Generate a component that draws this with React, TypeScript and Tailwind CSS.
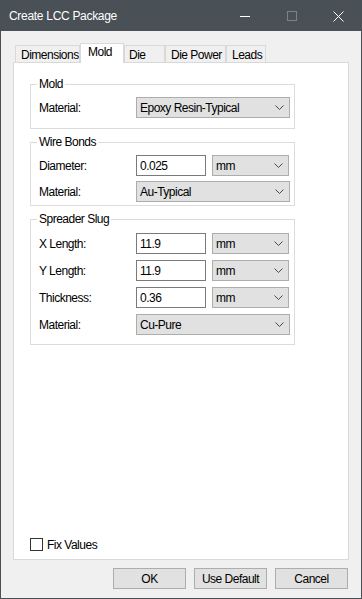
import React from "react";

const Chevron = () => (
  <svg width="9" height="5" viewBox="0 0 9 5" className="shrink-0">
    <path d="M0.5 0.5 L4.5 4.5 L8.5 0.5" fill="none" stroke="#4a4a4a" strokeWidth="1" />
  </svg>
);

function Combo({ value, width }: { value: string; width: string }) {
  return (
    <div className={`flex h-[21px] ${width} items-center justify-between border border-[#adadad] bg-[#e1e1e1] pl-[3px] pr-[5px]`}>
      <span>{value}</span>
      <Chevron />
    </div>
  );
}

function TextBox({ value }: { value: string }) {
  return (
    <div className="flex h-[21px] w-[70px] items-center border border-[#7a7a7a] bg-white pl-[3px]">
      {value}
    </div>
  );
}

function Row({ label, children }: { label: string; children: React.ReactNode }) {
  return (
    <div className="flex h-[21px] items-center">
      <span className="w-[97px] shrink-0">{label}</span>
      {children}
    </div>
  );
}

function UnitRow({ label, value }: { label: string; value: string }) {
  return (
    <Row label={label}>
      <div className="flex gap-[6px]">
        <TextBox value={value} />
        <Combo value="mm" width="w-[77px]" />
      </div>
    </Row>
  );
}

const tabs = [
  { name: "Dimensions", cls: "w-[65px] pl-[5px]" },
  { name: "Mold", cls: "w-[44px] pl-[7px]", active: true },
  { name: "Die", cls: "w-[41px] pl-[4px]" },
  { name: "Die Power", cls: "w-[61px] pl-[5px]" },
  { name: "Leads", cls: "w-[40px] pl-[5px]" },
];

export default function App() {
  return (
    <div className="flex h-[599px] w-[362px] flex-col border border-[#495056] bg-[#f0f0f0] font-['Liberation_Sans',Arial,sans-serif] text-[12px] tracking-[-0.5px] text-black">
      {/* title bar */}
      <div className="flex h-[30px] shrink-0 items-center bg-[#495056] pl-[8px] text-white">
        <span className="flex-1 tracking-[-0.3px]">Create LCC Package</span>
        <div className="mr-[37px] h-px w-[10px] bg-white" />
        <div className="mr-[36px] h-[10px] w-[10px] border border-[#7c8286]" />
        <svg width="11" height="11" viewBox="0 0 11 11" className="mr-[17px]">
          <path d="M0.5 0.5 L10.5 10.5 M10.5 0.5 L0.5 10.5" stroke="#ffffff" strokeWidth="1" />
        </svg>
      </div>

      <div className="flex flex-col px-[12px] pt-[12px]">
        {/* tabs */}
        <div className="flex h-[19px] items-end pl-[2px]">
          {tabs.map((t) =>
            t.active ? (
              <div
                key={t.name}
                className={`relative z-10 -mb-px flex h-[20px] ${t.cls} items-start border-x border-t border-[#d9d9d9] bg-white pt-[1px] leading-[14px]`}
              >
                {t.name}
              </div>
            ) : (
              <div
                key={t.name}
                className={`flex h-[17px] ${t.cls} items-center overflow-hidden whitespace-nowrap border-x border-t border-[#d9d9d9] bg-[#f0f0f0] pt-[2px] leading-[14px]`}
              >
                {t.name}
              </div>
            )
          )}
        </div>

        {/* panel */}
        <div className="flex h-[498px] flex-col border border-[#d9d9d9] bg-white pt-[14px]">
          <fieldset className="ml-[16px] mr-[53px] min-w-0 border border-[#dcdcdc] pl-[8px] pr-[4px] pt-[6px] pb-[10px]">
            <legend className="-ml-[2px] px-[2px] leading-[14px]">Mold</legend>
            <Row label="Material:">
              <Combo value="Epoxy Resin-Typical" width="w-[154px]" />
            </Row>
          </fieldset>

          <fieldset className="ml-[16px] mr-[53px] mt-[6px] flex min-w-0 flex-col gap-[5px] border border-[#dcdcdc] pl-[8px] pr-[4px] pt-[6px] pb-[3px]">
            <legend className="-ml-[2px] px-[2px] leading-[14px]">Wire Bonds</legend>
            <UnitRow label="Diameter:" value="0.025" />
            <Row label="Material:">
              <Combo value="Au-Typical" width="w-[154px]" />
            </Row>
          </fieldset>

          <fieldset className="ml-[16px] mr-[53px] mt-[6px] flex min-w-0 flex-col gap-[6px] border border-[#dcdcdc] pl-[8px] pr-[4px] pt-[7px] pb-[9px]">
            <legend className="-ml-[2px] px-[2px] leading-[14px]">Spreader Slug</legend>
            <UnitRow label="X Length:" value="11.9" />
            <UnitRow label="Y Length:" value="11.9" />
            <UnitRow label="Thickness:" value="0.36" />
            <Row label="Material:">
              <Combo value="Cu-Pure" width="w-[154px]" />
            </Row>
          </fieldset>

          <div className="flex-1" />

          <div className="mb-[8px] ml-[16px] flex h-[13px] items-center gap-[4px]">
            <div className="h-[13px] w-[13px] border border-[#333333] bg-white" />
            <span>Fix Values</span>
          </div>
        </div>

        {/* buttons */}
        <div className="mr-[1px] mt-[8px] flex justify-end gap-[8px]">
          {["OK", "Use Default", "Cancel"].map((b) => (
            <div
              key={b}
              className="flex h-[21px] w-[73px] items-center justify-center border border-[#adadad] bg-[#e1e1e1]"
            >
              {b}
            </div>
          ))}
        </div>
      </div>
    </div>
  );
}
